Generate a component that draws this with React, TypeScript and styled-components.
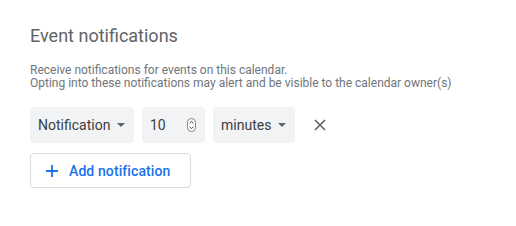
import React from "react";
import styled, { createGlobalStyle } from "styled-components";

const GlobalStyle = createGlobalStyle`
  html, body {
    margin: 0;
    padding: 0;
    background: #ffffff;
  }
  body {
    font-family: Roboto, "Noto Sans", Arial, sans-serif;
    -webkit-font-smoothing: antialiased;
  }
`;

const Page = styled.div`
  width: 516px;
  height: 226px;
  box-sizing: border-box;
  padding: 24px 30px 0;
`;

const Title = styled.h2`
  margin: 0;
  font-size: 18px;
  font-weight: 400;
  line-height: 24px;
  color: #5f6368;
`;

const Description = styled.p`
  margin: 16px 0 0;
  font-size: 12px;
  line-height: 13px;
  color: #70757a;
`;

const Row = styled.div`
  display: flex;
  align-items: center;
  gap: 8px;
  margin-top: 17px;
`;

const Field = styled.div<{ $width: number }>`
  display: flex;
  align-items: center;
  justify-content: space-between;
  box-sizing: border-box;
  width: ${(p) => p.$width}px;
  height: 36px;
  padding: 0 9px 0 8px;
  border-radius: 4px;
  background: #f1f3f4;
  font-size: 14px;
  color: #3c4043;
`;

const Caret = styled.span`
  width: 0;
  height: 0;
  border-left: 4px solid transparent;
  border-right: 4px solid transparent;
  border-top: 4px solid #5f6368;
`;

const IconButton = styled.button`
  display: flex;
  align-items: center;
  justify-content: center;
  width: 28px;
  height: 28px;
  margin-left: 3px;
  padding: 0;
  border: none;
  background: transparent;
  color: #5f6368;
`;

const AddButton = styled.button`
  display: flex;
  align-items: center;
  gap: 11px;
  box-sizing: border-box;
  width: 161px;
  height: 35px;
  margin-top: 10px;
  padding: 0 0 0 15px;
  border: 1px solid #dadce0;
  border-radius: 4px;
  background: #ffffff;
  font-family: Roboto, "Noto Sans", Arial, sans-serif;
  font-size: 14px;
  font-weight: 500;
  letter-spacing: 0.1px;
  color: #1a73e8;
`;

const Spinner = () => (
  <svg width="9" height="14" viewBox="0 0 9 14">
    <rect x="0.5" y="0.5" width="8" height="13" rx="4" fill="#fff" stroke="#80868b" />
    <path d="M2.6 5.2 L4.5 3.4 L6.4 5.2" fill="none" stroke="#3c4043" strokeWidth="1" />
    <path d="M2.6 8.8 L4.5 10.6 L6.4 8.8" fill="none" stroke="#3c4043" strokeWidth="1" />
  </svg>
);

const CloseIcon = () => (
  <svg width="12" height="12" viewBox="0 0 12 12">
    <path d="M1 1 L11 11 M11 1 L1 11" stroke="currentColor" strokeWidth="1.6" />
  </svg>
);

const PlusIcon = () => (
  <svg width="12" height="12" viewBox="0 0 12 12">
    <path d="M6 0 V12 M0 6 H12" stroke="currentColor" strokeWidth="1.8" />
  </svg>
);

export default function App() {
  return (
    <>
      <GlobalStyle />
      <Page>
        <Title>Event notifications</Title>
        <Description>
          Receive notifications for events on this calendar.
          <br />
          Opting into these notifications may alert and be visible to the calendar owner(s)
        </Description>
        <Row>
          <Field $width={104}>
            Notification
            <Caret />
          </Field>
          <Field $width={63}>
            10
            <Spinner />
          </Field>
          <Field $width={82}>
            minutes
            <Caret />
          </Field>
          <IconButton aria-label="Remove notification">
            <CloseIcon />
          </IconButton>
        </Row>
        <AddButton>
          <PlusIcon />
          Add notification
        </AddButton>
      </Page>
    </>
  );
}
